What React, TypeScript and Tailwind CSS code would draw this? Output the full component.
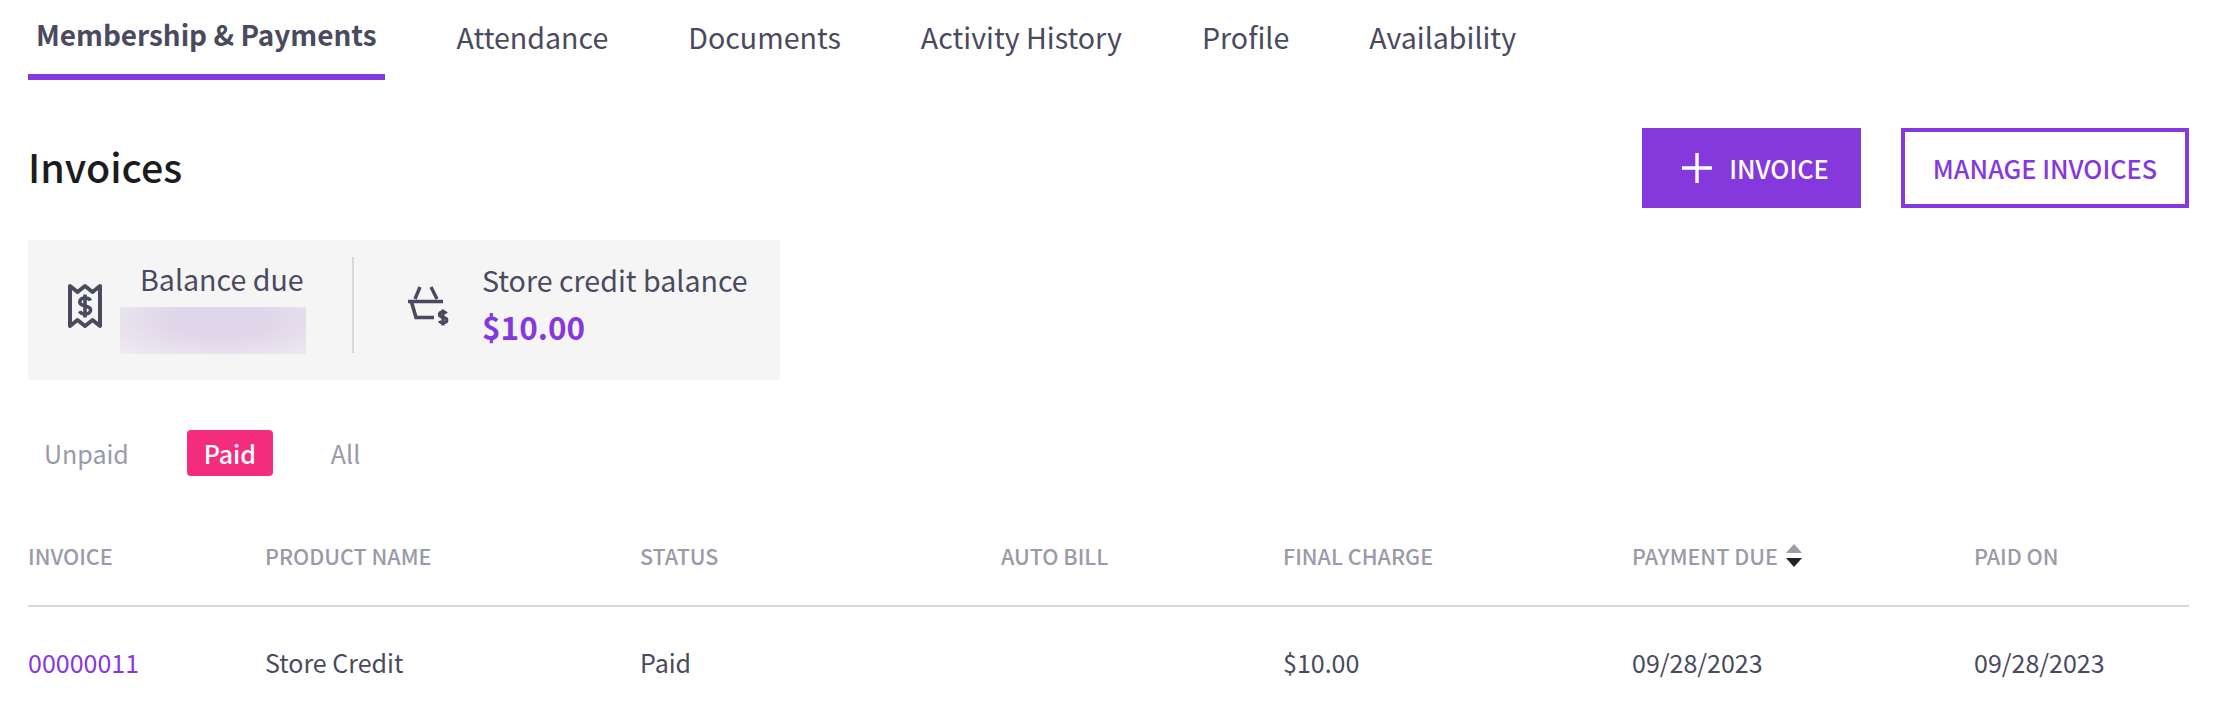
import React from "react";

const font = "font-['Noto_Sans_CJK_SC','Source_Sans_Pro',sans-serif]";

function Tab({ label, active }: { label: string; active?: boolean }) {
  if (active) {
    return (
      <div className="h-[80px] px-2 pt-[14px] border-b-[6px] border-[#8539dd] text-[27.9px] leading-[40px] font-bold text-[#4a4a5e]">
        {label}
      </div>
    );
  }
  return <div className="h-[80px] px-2 pt-[17px] text-[28.6px] leading-[40px] text-[#4a4a5e]">{label}</div>;
}

function ReceiptIcon() {
  return (
    <svg width="34" height="46" viewBox="0 0 34 46" fill="none" className="shrink-0 mt-[2px]">
      <path
        d="M2 3 L9.5 9 L17 3 L24.5 9 L32 3 V43 L24.5 37 L17 43 L9.5 37 L2 43 Z"
        stroke="#4a4a5e"
        strokeWidth="4"
        strokeLinejoin="round"
      />
      <path
        d="M22.5 17.5 C21.5 15.5 19.5 15 17 15 C14 15 11.8 16.5 11.8 19 C11.8 24.5 22.6 21.5 22.6 27 C22.6 29.5 20 31 17 31 C14.5 31 12.5 30.3 11.5 28.3"
        stroke="#4a4a5e"
        strokeWidth="3.6"
      />
      <path d="M17 11.5 V34.5" stroke="#4a4a5e" strokeWidth="3.6" />
    </svg>
  );
}

function BasketIcon() {
  return (
    <svg width="42" height="42" viewBox="0 0 42 42" fill="none" className="shrink-0 mt-[4px]">
      <path d="M1 15.5 H36" stroke="#4a4a5e" strokeWidth="3.6" />
      <path d="M8 13 L13 1 M24 1 L30 13" stroke="#4a4a5e" strokeWidth="3.4" />
      <path d="M4.5 16 L9 31.5 H27" stroke="#4a4a5e" strokeWidth="3.6" />
      <path
        d="M39.5 27.5 C38.8 26.3 37.6 26 36 26 C33.8 26 32.4 27 32.4 28.7 C32.4 32.3 39.8 30.3 39.8 34 C39.8 35.7 38.2 36.8 36 36.8 C34.4 36.8 33 36.3 32.2 35"
        stroke="#4a4a5e"
        strokeWidth="3.2"
      />
      <path d="M36 23.5 V39.5" stroke="#4a4a5e" strokeWidth="3.2" />
    </svg>
  );
}

function SortIcon() {
  return (
    <svg width="16" height="23" viewBox="0 0 16 23" className="shrink-0 mt-[3px]">
      <path d="M8 0 L16 9 H0 Z" fill="#9a9aa8" />
      <path d="M0 14 H16 L8 23 Z" fill="#222222" />
    </svg>
  );
}

const gridCols = "grid grid-cols-[237px_375px_361px_282px_349px_342px_215px]";

export default function App() {
  const headers = ["INVOICE", "PRODUCT NAME", "STATUS", "AUTO BILL", "FINAL CHARGE", "PAYMENT DUE", "PAID ON"];
  return (
    <div className={`${font} w-[2214px] h-[726px] bg-white pl-[28px] pr-[25px] overflow-hidden`}>
      <div className="flex gap-16">
        <Tab label="Membership & Payments" active />
        <Tab label="Attendance" />
        <Tab label="Documents" />
        <Tab label="Activity History" />
        <Tab label="Profile" />
        <Tab label="Availability" />
      </div>

      <div className="flex items-center justify-between mt-[48px] h-[80px]">
        <h1 className="pb-[4px] text-[39.4px] leading-[50px] font-medium text-[#1c1c1e]">Invoices</h1>
        <div className="flex gap-10">
          <button className="w-[219px] h-[80px] pl-[8px] bg-[#8539dd] flex items-center justify-center gap-[17px] text-white text-[25.3px] leading-[32px] font-medium">
            <svg width="30" height="30" viewBox="0 0 30 30">
              <path d="M15 0 V30 M0 15 H30" stroke="#ffffff" strokeWidth="3.4" />
            </svg>
            INVOICE
          </button>
          <button className="w-[288px] h-[80px] border-[4px] border-[#8539dd] bg-white flex items-center justify-center text-[#8539dd] text-[25.3px] leading-[32px] font-medium">
            MANAGE INVOICES
          </button>
        </div>
      </div>

      <div className="mt-[32px] w-[752px] h-[140px] bg-[#f5f5f5] flex items-center pb-[10px]">
        <div className="ml-10 flex items-center">
          <ReceiptIcon />
          <div className="ml-[18px] w-[186px] pt-[3px]">
            <div className="pl-[20px] text-[28.6px] leading-[40px] text-[#4a4a5e] whitespace-nowrap">Balance due</div>
            <div className="mt-[8px] h-[47px] bg-[radial-gradient(ellipse_at_55%_30%,#e0d6e9_35%,#efebf3_100%)]"></div>
          </div>
        </div>
        <div className="ml-[46px] w-[2px] h-[96px] bg-[#d8d8dc]"></div>
        <div className="ml-[53px] flex items-center gap-[33px]">
          <BasketIcon />
          <div className="mb-[3px]">
            <div className="text-[28.6px] leading-[40px] text-[#4a4a5e] whitespace-nowrap">Store credit balance</div>
            <div className="mt-[4px] text-[31.5px] leading-[44px] font-semibold text-[#8539dd]">$10.00</div>
          </div>
        </div>
      </div>

      <div className="mt-[50px] flex items-center h-[46px] text-[25px] leading-[34px]">
        <div className="ml-[16px] text-[#9a9aa8]">Unpaid</div>
        <div className="ml-[58px] w-[86px] h-[46px] rounded-[4px] bg-[#f42c7e] text-white font-medium flex items-center justify-center">
          Paid
        </div>
        <div className="ml-[58px] text-[#9a9aa8]">All</div>
      </div>

      <div className={`${gridCols} mt-[58px] h-[73px] border-b-2 border-[#d8d8dc] text-[21.5px] leading-[30px] font-medium text-[#9a9aa8]`}>
        {headers.map((h) => (
          <div key={h} className="flex items-start gap-2 pt-[7px] whitespace-nowrap">
            {h}
            {h === "PAYMENT DUE" && <SortIcon />}
          </div>
        ))}
      </div>
      <div className={`${gridCols} pt-[38px] text-[25px] leading-[34px] text-[#4a4a5e]`}>
        <div className="text-[#8539dd]">00000011</div>
        <div>Store Credit</div>
        <div>Paid</div>
        <div></div>
        <div>$10.00</div>
        <div>09/28/2023</div>
        <div>09/28/2023</div>
      </div>
    </div>
  );
}
